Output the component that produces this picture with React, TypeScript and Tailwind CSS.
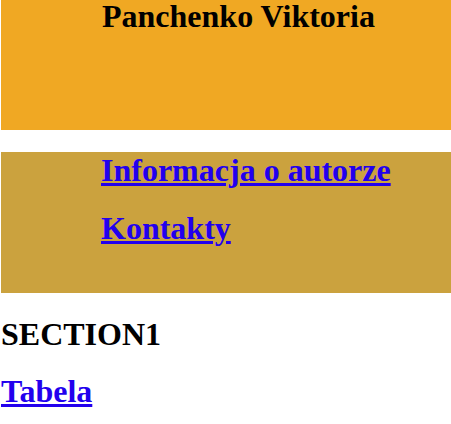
import React from "react";

export default function App() {
  return (
    <div className="w-[451px] h-[424px] bg-white font-[family-name:'Liberation_Serif',serif] text-black overflow-hidden">
      <div className="ml-px h-[130px] bg-[#f0a823]">
        <h1 className="pl-[101px] text-[32px] leading-[32px] font-bold">Panchenko Viktoria</h1>
      </div>
      <nav className="ml-px mt-[22px] h-[141px] bg-[#cba23e] pt-[2px] pl-[100px] flex flex-col items-start gap-[26px]">
        <a href="#" className="text-[32px] leading-[32px] font-bold text-[#2200ee] underline decoration-[3px] underline-offset-[2px]">Informacja o autorze</a>
        <a href="#" className="text-[32px] leading-[32px] font-bold text-[#2200ee] underline decoration-[3px] underline-offset-[2px]">Kontakty</a>
      </nav>
      <div className="pt-[25px] pl-px flex flex-col items-start gap-[25px]">
        <h2 className="text-[32px] leading-[32px] font-bold">SECTION1</h2>
        <a href="#" className="text-[32px] leading-[32px] font-bold text-[#2200ee] underline decoration-[3px] underline-offset-[2px]">Tabela</a>
      </div>
    </div>
  );
}
